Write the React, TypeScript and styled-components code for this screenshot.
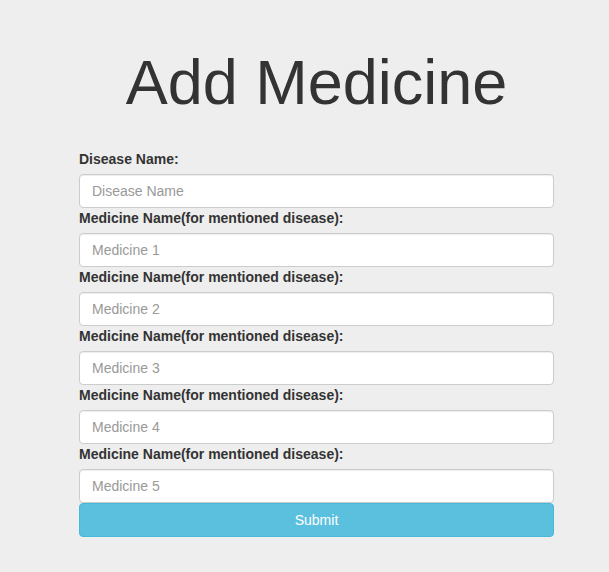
import React from "react";
import styled, { createGlobalStyle } from "styled-components";

const GlobalStyle = createGlobalStyle`
  html, body {
    margin: 0;
    padding: 0;
    background: #eeeeee;
    font-family: "Liberation Sans", Arial, Helvetica, sans-serif;
    font-size: 14px;
    line-height: 1.42857143;
    color: #333333;
  }
  * {
    box-sizing: border-box;
  }
`;

const Page = styled.div`
  min-height: 572px;
  padding: 48px 55px 0 79px;
`;

const Title = styled.h1`
  margin: 0 0 32px;
  font-size: 63px;
  font-weight: 400;
  line-height: 1.1;
  text-align: center;
  color: #333333;
`;

const Form = styled.form`
  display: flex;
  flex-direction: column;
  width: 475px;
`;

const Label = styled.label`
  display: block;
  margin-bottom: 5px;
  font-weight: 700;
  font-size: 14px;
  line-height: 20px;
`;

const Input = styled.input`
  display: block;
  width: 100%;
  height: 34px;
  padding: 6px 12px;
  font-family: inherit;
  font-size: 14px;
  line-height: 1.42857143;
  color: #555555;
  background: #ffffff;
  border: 1px solid #cccccc;
  border-radius: 4px;
  box-shadow: inset 0 1px 1px rgba(0, 0, 0, 0.075);
  outline: none;

  &::placeholder {
    color: #999999;
  }
`;

const SubmitButton = styled.button`
  display: block;
  width: 100%;
  height: 34px;
  padding: 6px 12px;
  font-family: inherit;
  font-size: 14px;
  line-height: 1.42857143;
  color: #ffffff;
  background: #5bc0de;
  border: 1px solid #46b8da;
  border-radius: 4px;
  cursor: pointer;
`;

const medicines = ["Medicine 1", "Medicine 2", "Medicine 3", "Medicine 4", "Medicine 5"];

export default function App() {
  return (
    <>
      <GlobalStyle />
      <Page>
        <Title>Add Medicine</Title>
        <Form onSubmit={(e) => e.preventDefault()}>
          <Label>Disease Name:</Label>
          <Input type="text" placeholder="Disease Name" />
          {medicines.map((m) => (
            <React.Fragment key={m}>
              <Label>Medicine Name(for mentioned disease):</Label>
              <Input type="text" placeholder={m} />
            </React.Fragment>
          ))}
          <SubmitButton type="submit">Submit</SubmitButton>
        </Form>
      </Page>
    </>
  );
}
